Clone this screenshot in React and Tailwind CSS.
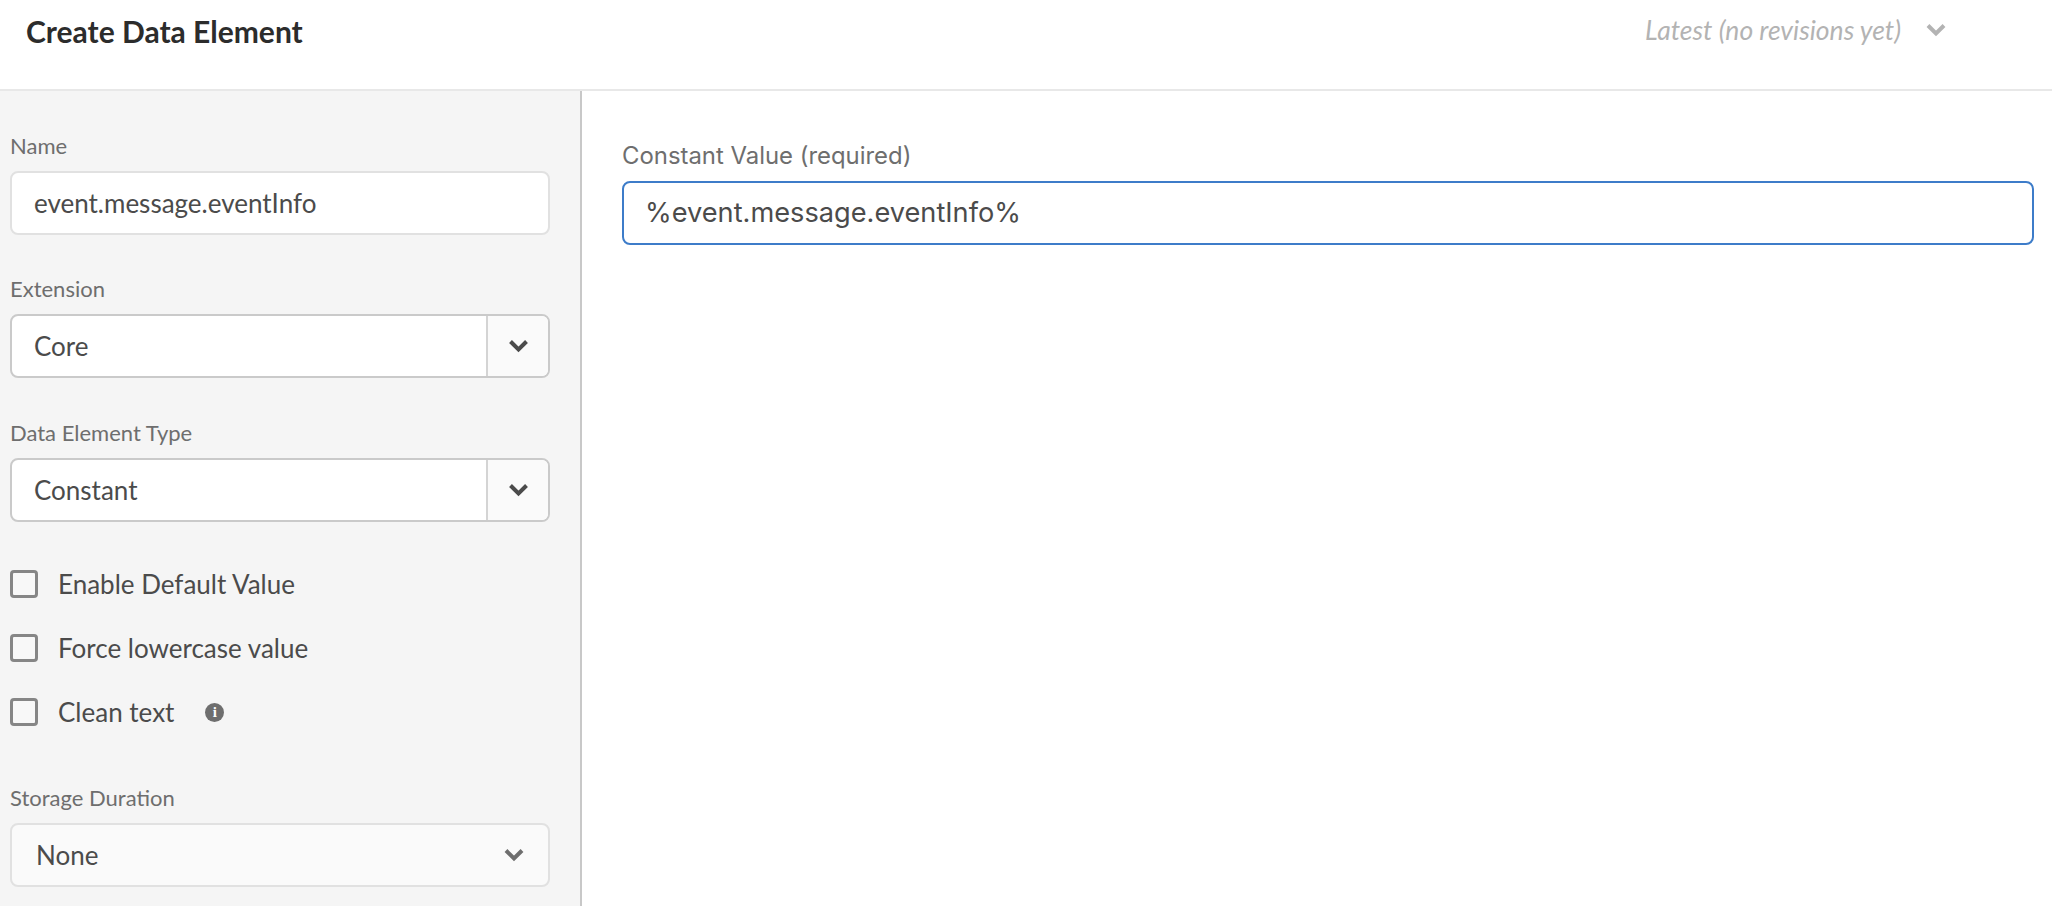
import React from "react";

const Chevron = ({ className = "" }) => (
  <svg viewBox="0 0 20 14" className={className} fill="none" stroke="currentColor" strokeWidth="4">
    <path d="M2 2.5 L10 10.5 L18 2.5" />
  </svg>
);

const Label = ({ children }) => (
  <p className="text-[22px] leading-[24px] text-[#6e6e6e] pl-[10px]">{children}</p>
);

const ComboBox = ({ value }) => (
  <div className="mt-[13px] ml-[10px] w-[540px] h-[64px] flex rounded-[8px] border-2 border-[#cacaca] bg-white overflow-hidden">
    <div className="flex-1 flex items-center pl-[22px] text-[26px] text-[#4b4b4b]">{value}</div>
    <div className="w-[62px] flex items-center justify-center border-l-2 border-[#d4d4d4] bg-[#fafafa] text-[#4b4b4b]">
      <Chevron className="w-[21px] h-[14px]" />
    </div>
  </div>
);

const CheckRow = ({ label, children }) => (
  <div className="flex items-center h-[28px] pl-[10px] text-[26px] text-[#4b4b4b]">
    <div className="w-[28px] h-[28px] rounded-[4px] border-[3px] border-[#868686] bg-[#f8f8f8]" />
    <span className="ml-[20px]">{label}</span>
    {children}
  </div>
);

const App = () => {
  return (
    <div className="w-[2052px] h-[906px] overflow-hidden bg-white flex flex-col font-['Lato','Noto_Sans',sans-serif]">
      <header className="h-[91px] shrink-0 border-b-2 border-[#e8e8e8] flex items-start justify-between">
        <h1 className="ml-[26px] mt-[13px] text-[30px] leading-[36px] font-bold text-[#2c2c2c]">Create Data Element</h1>
        <div className="mt-[12px] mr-[106px] flex items-center text-[#b3b3b3]">
          <span className="text-[26.5px] leading-[36px] italic">Latest (no revisions yet)</span>
          <Chevron className="ml-[25px] w-[20px] h-[14px]" />
        </div>
      </header>
      <div className="flex-1 flex">
        <aside className="w-[582px] shrink-0 bg-[#f5f5f5] border-r-2 border-[#c8c8c8] pt-[43px]">
          <Label>Name</Label>
          <div className="mt-[13px] ml-[10px] w-[540px] h-[64px] flex items-center pl-[22px] rounded-[8px] border-2 border-[#e1e1e1] bg-white text-[26px] text-[#4b4b4b]">
            event.message.eventInfo
          </div>
          <div className="mt-[42px]">
            <Label>Extension</Label>
            <ComboBox value="Core" />
          </div>
          <div className="mt-[43px]">
            <Label>Data Element Type</Label>
            <ComboBox value="Constant" />
          </div>
          <div className="mt-[48px] flex flex-col gap-[36px]">
            <CheckRow label="Enable Default Value" />
            <CheckRow label="Force lowercase value" />
            <CheckRow label="Clean text">
              <span className="ml-[31px] w-[19px] h-[19px] rounded-full bg-[#6e6e6e] flex items-center justify-center text-white text-[15px] leading-none font-bold font-['Liberation_Serif',serif]">i</span>
            </CheckRow>
          </div>
          <div className="mt-[60px]">
            <Label>Storage Duration</Label>
            <div className="mt-[13px] ml-[10px] w-[540px] h-[64px] flex items-center justify-between pl-[24px] pr-[24px] rounded-[8px] border-2 border-[#e1e1e1] bg-[#fafafa] text-[26px] text-[#4b4b4b]">
              None
              <Chevron className="w-[20px] h-[14px] text-[#6e6e6e]" />
            </div>
          </div>
        </aside>
        <main className="flex-1 pl-[40px] pr-[18px] pt-[51px] font-['Inter','Liberation_Sans',sans-serif]">
          <p className="text-[23.9px] leading-[28px] text-[#6e6e6e]">Constant Value (required)</p>
          <div className="mt-[11px] h-[64px] flex items-center pl-[21px] rounded-[8px] border-2 border-[#3d7cc9] text-[27.2px] text-[#4b4b4b]">
            %event.message.eventInfo%
          </div>
        </main>
      </div>
    </div>
  );
};

export default App;
